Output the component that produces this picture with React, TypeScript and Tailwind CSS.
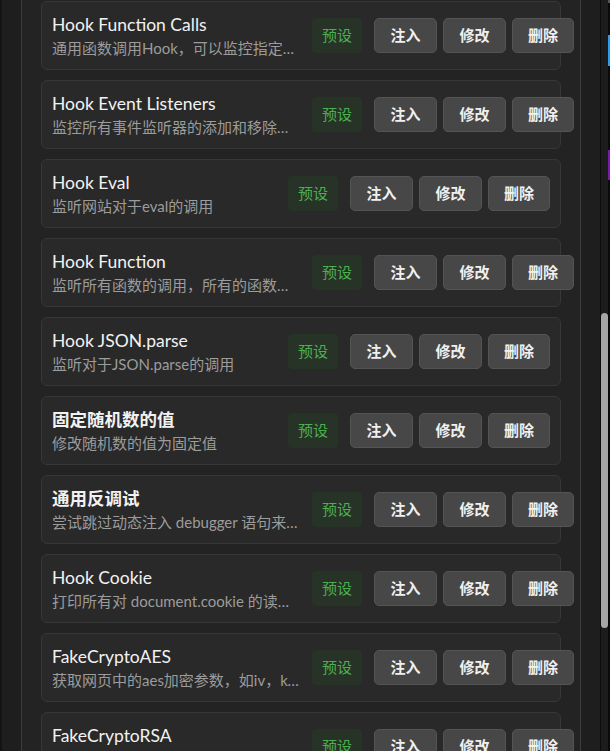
import React from "react";

type HookItem = { title: string; desc: string };

const hooks: HookItem[] = [
    { title: "Hook Function Calls", desc: "通用函数调用Hook，可以监控指定函数的调用和参数" },
    { title: "Hook Event Listeners", desc: "监控所有事件监听器的添加和移除操作" },
    { title: "Hook Eval", desc: "监听网站对于eval的调用" },
    { title: "Hook Function", desc: "监听所有函数的调用，所有的函数调用都会被记录" },
    { title: "Hook JSON.parse", desc: "监听对于JSON.parse的调用" },
    { title: "固定随机数的值", desc: "修改随机数的值为固定值" },
    { title: "通用反调试", desc: "尝试跳过动态注入 debugger 语句来实现反调试" },
    { title: "Hook Cookie", desc: "打印所有对 document.cookie 的读写操作" },
    { title: "FakeCryptoAES", desc: "获取网页中的aes加密参数，如iv，key等" },
    { title: "FakeCryptoRSA", desc: "获取网页中的rsa加密参数，如公钥，私钥等" },
];

const font = { fontFamily: 'Lato, "Noto Sans CJK SC", sans-serif' };

//-----------------------------------------------------------------------------------------------------------
export default function App(): JSX.Element {
    return (
        <div className="flex h-[751px] w-[610px] overflow-hidden bg-[#1e1e1e]" style={font}>
            <div className="w-[2px] shrink-0 bg-[#141414]" />
            <div className="w-[19px] shrink-0" />
            <div className="w-[560px] shrink-0 border-x border-[#3c3c3c] bg-[#232323] px-[19px] pt-[1px]">
                <div className="flex flex-col gap-[10px]">
                    {hooks.map((h) => (
                        <HookCard key={h.title} item={h} />
                    ))}
                </div>
            </div>
            <div className="w-[19px] shrink-0" />
            <div className="w-px shrink-0 bg-[#0c0c0c]" />
            <div className="relative w-[7px] shrink-0 bg-[#1c1c1c]">
                <div className="absolute left-0 top-[313px] h-[315px] w-[7px] rounded-full bg-[#a6a6a6]" />
            </div>
            <div className="relative w-[2px] shrink-0 bg-[#0a0a0a]">
                <div className="absolute left-0 top-0 h-[3px] w-[2px] bg-[#555]" />
                <div className="absolute left-0 top-[35px] h-[31px] w-[2px] bg-[#2c9cf0]" />
                <div className="absolute left-0 top-[150px] h-[30px] w-[2px] bg-[#7a18b0]" />
            </div>
        </div>
    );
}

type HookCardProps = { item: HookItem };
function HookCard(props: HookCardProps): JSX.Element {
    // chinese titles are rendered heavier than latin ones in the original
    const cjk = /[\u4e00-\u9fff]/.test(props.item.title);
    return (
        <div className="flex h-[69px] items-center justify-between gap-[10px] rounded-md border border-[#373737] bg-[#292929] px-[10px]">
            <div className="max-w-[250px] shrink-0 overflow-hidden">
                <div
                    className={
                        "truncate text-[17.5px] leading-[25px] text-[#f2f2f2] " + (cjk ? "font-semibold" : "font-normal")
                    }
                >
                    {props.item.title}
                </div>
                <div className="truncate text-[15px] leading-[22px] text-[#9c9c9c]">{props.item.desc}</div>
            </div>
            <div className="flex shrink-0 items-center">
                <span className="mr-[12px] flex h-[35px] w-[50px] items-center justify-center rounded bg-[#263326] text-[15px] text-[#4caf50]">
                    预设
                </span>
                <div className="flex gap-[6px]">
                    <ActionButton label="注入" />
                    <ActionButton label="修改" />
                    <ActionButton label="删除" width="w-[62px]" />
                </div>
            </div>
        </div>
    );
}

function ActionButton(props: { label: string; width?: string }): JSX.Element {
    return (
        <button
            className={
                "flex h-[35px] items-center justify-center rounded-[5px] border border-[#545454] bg-[#474747] text-[15px] font-bold text-[#f0f0f0] " +
                (props.width ?? "w-[63px]")
            }
        >
            {props.label}
        </button>
    );
}
